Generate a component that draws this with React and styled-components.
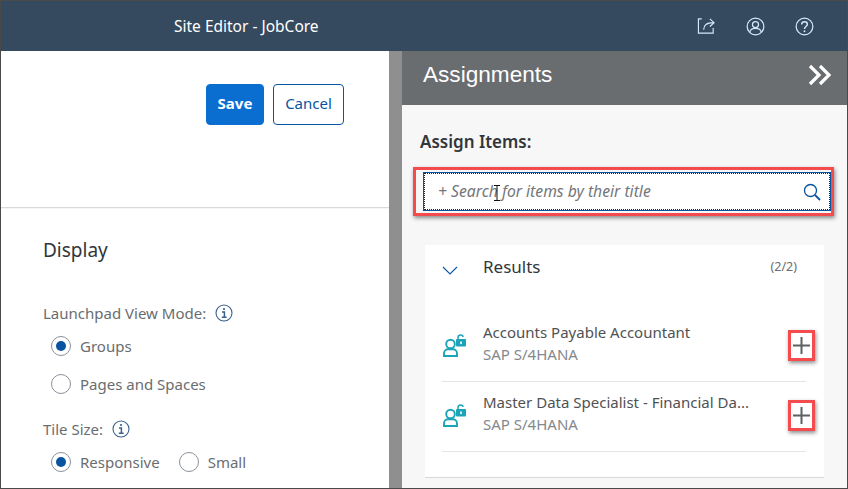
import React from 'react';
import styled, { createGlobalStyle } from 'styled-components';

const GlobalStyle = createGlobalStyle`
  html, body {
    margin: 0;
    padding: 0;
    background: #fff;
  }
  * {
    box-sizing: border-box;
  }
`;

const Frame = styled.div`
  width: 848px;
  height: 489px;
  overflow: hidden;
  display: flex;
  flex-direction: column;
  border: 1px solid #4a4a4a;
  font-family: "Noto Sans", "Open Sans", sans-serif;
`;

const Shell = styled.header`
  flex: 0 0 50px;
  background: #354a5f;
  display: flex;
  align-items: center;
  color: #fff;
  padding-left: 173px;
  padding-right: 33px;
`;

const ShellTitle = styled.div`
  flex: 1;
  font-size: 15.5px;
  margin-top: -1px;
`;

const ShellIcons = styled.div`
  display: flex;
  align-items: center;
  gap: 30px;
  color: #d1e8ff;
`;

const Body = styled.div`
  flex: 1;
  display: flex;
  min-height: 0;
`;

const LeftPanel = styled.section`
  flex: 0 0 388px;
  background: #fff;
  display: flex;
  flex-direction: column;
`;

const ActionBar = styled.div`
  flex: 0 0 157px;
  border-bottom: 1px solid #d9d9d9;
  box-shadow: 0 1px 1px rgba(0, 0, 0, 0.04);
  display: flex;
  justify-content: flex-end;
  gap: 9px;
  padding: 33px 45px 0 0;
`;

const Button = styled.button`
  height: 41px;
  width: ${p => (p.$primary ? 58 : 71)}px;
  border-radius: 4px;
  border: 1px solid ${p => (p.$primary ? '#0a6ed1' : '#0854a0')};
  background: ${p => (p.$primary ? '#0a6ed1' : '#fff')};
  color: ${p => (p.$primary ? '#fff' : '#0854a0')};
  font-family: inherit;
  font-size: 15px;
  font-weight: ${p => (p.$primary ? 700 : 400)};
  padding: 0 0 3px;
`;

const Form = styled.div`
  padding: 30px 0 0 42px;
  color: #6a6d70;
`;

const SectionTitle = styled.h2`
  margin: 0 0 41px;
  font-size: 19px;
  line-height: 24px;
  font-weight: 400;
  color: #32363a;
`;

const FieldLabel = styled.div`
  display: flex;
  align-items: center;
  gap: 9px;
  font-size: 15px;
  line-height: 20px;
  margin-bottom: ${p => p.$gap}px;
`;

const RadioRow = styled.div`
  display: flex;
  align-items: center;
  padding-left: 8px;
  margin-bottom: ${p => p.$gap || 0}px;
`;

const Radio = styled.label`
  display: flex;
  align-items: center;
  gap: 9px;
  font-size: 15px;
  line-height: 20px;
  margin-right: 19px;
`;

const RadioDot = styled.span`
  width: 20px;
  height: 20px;
  border-radius: 50%;
  border: 1px solid #89919a;
  background: #fff;
  display: flex;
  align-items: center;
  justify-content: center;

  &::after {
    content: "";
    width: 10px;
    height: 10px;
    border-radius: 50%;
    background: ${p => (p.$on ? '#0854a0' : 'transparent')};
  }
`;

const Splitter = styled.div`
  flex: 0 0 13px;
  background: #8f8f8f;
`;

const RightPanel = styled.section`
  flex: 1;
  background: #f7f7f7;
  display: flex;
  flex-direction: column;
`;

const PanelHeader = styled.div`
  flex: 0 0 54px;
  background: #6a6d70;
  color: #fff;
  display: flex;
  align-items: center;
  justify-content: space-between;
  padding: 0 15px 6px 21px;
  font-family: "Liberation Sans", Arial, sans-serif;
  font-size: 22.6px;
`;

const PanelBody = styled.div`
  flex: 1;
  padding: 26px 13px 0 11px;
`;

const AssignLabel = styled.div`
  font-size: 17px;
  line-height: 22px;
  font-weight: 600;
  color: #32363a;
  padding-left: 7px;
  margin-bottom: 14px;
`;

const Highlight = styled.div`
  border: 3px solid #f44b4f;
  box-shadow: 1px 2px 4px rgba(0, 0, 0, 0.45);
`;

const SearchBox = styled.div`
  height: 39px;
  margin: 2px 0 2px 7px;
  background: #fff;
  border: 1px solid #0854a0;
  outline: 1px dotted #222;
  outline-offset: -2px;
  display: flex;
  align-items: center;
  justify-content: space-between;
  padding: 0 9px 0 14px;
  position: relative;
`;

const Placeholder = styled.span`
  font-size: 15.7px;
  font-style: italic;
  color: #74777a;
  margin-top: -2px;
`;

const TextCursor = styled.svg`
  position: absolute;
  left: 69px;
  top: 12px;
`;

const ResultsCard = styled.div`
  margin: 29px 10px 0 12px;
  height: 233px;
  background: #fff;
  border-bottom: 1px solid #d9d9d9;
  padding: 0 18px 0 17px;
`;

const ResultsHeader = styled.div`
  height: 67px;
  display: flex;
  align-items: center;
  padding-bottom: 25px;
`;

const Chevron = styled.svg`
  flex: 0 0 16px;
  margin-top: 8px;
  margin-right: 25px;
`;

const ResultsTitle = styled.div`
  flex: 1;
  font-size: 17px;
  color: #32363a;
`;

const ResultsCount = styled.div`
  font-size: 12.5px;
  color: #6a6d70;
  padding-right: 9px;
`;

const Item = styled.div`
  display: flex;
  align-items: center;
  height: 70px;
  border-bottom: 1px solid #e5e5e5;
`;

const ItemIcon = styled.svg`
  flex: 0 0 23px;
  margin: 0 17px 2px 1px;
`;

const ItemText = styled.div`
  flex: 1;
  min-width: 0;
  padding-bottom: 6px;
`;

const ItemTitle = styled.div`
  font-size: 15px;
  line-height: 22px;
  color: #4f5255;
  white-space: nowrap;
`;

const ItemSub = styled.div`
  font-size: 15px;
  line-height: 23px;
  color: #85888b;
`;

const AddButton = styled.div`
  width: 27px;
  height: 31px;
  margin: 0 -9px 3px 0;
  border: 3px solid #f44b4f;
  box-shadow: 1px 2px 4px rgba(0, 0, 0, 0.45);
  display: flex;
  align-items: center;
  justify-content: center;
  background: #fff;
`;

const InfoIcon = () => (
  <svg width="18" height="18" viewBox="0 0 18 18" fill="none" stroke="#38618c">
    <circle cx="9" cy="9" r="8" strokeWidth="1.1" />
    <circle cx="9" cy="5" r="1.1" fill="#38618c" stroke="none" />
    <path d="M7 8h2.4v5M6.800 13.200h4.800" strokeWidth="1.5" />
  </svg>
);

const LockUser = () => (
  <ItemIcon width="23" height="23" viewBox="0 0 23 23" fill="none">
    <circle cx="7.5" cy="10" r="4.3" stroke="#1ba3b8" strokeWidth="1.9" />
    <path d="M1 22v-2.500c0-2.600 2-4.200 4-4.200h5c2 0 4 1.600 4 4.200V22z" stroke="#1ba3b8" strokeWidth="1.9" />
    <path d="M15 5V3.500C15 1.800 16.200 1 17.500 1S20 1.800 20 3" stroke="#1ba3b8" strokeWidth="1.5" />
    <rect x="13" y="5" width="10" height="7.5" rx="1" fill="#1ba3b8" />
    <rect x="17.2" y="7.5" width="1.6" height="2.6" fill="#fff" />
  </ItemIcon>
);

const Plus = () => (
  <svg width="19" height="19" viewBox="0 0 19 19" stroke="#5e6163" strokeWidth="2">
    <path d="M9.500 1v17M1 9.500h17" />
  </svg>
);

const items = ['Accounts Payable Accountant', 'Master Data Specialist - Financial Da...'];

export default function App() {
  return (
    <Frame>
      <GlobalStyle />
      <Shell>
        <ShellTitle>Site Editor - JobCore</ShellTitle>
        <ShellIcons>
          <svg width="19" height="18" viewBox="0 0 20 18" fill="none" stroke="currentColor" strokeWidth="1.2">
            <path d="M5 1.500H1.500v15H17V11" />
            <path d="M7 13c0-5 3-7.500 10.500-7.500M13.500 1.500l4.500 4-4.500 4" />
          </svg>
          <svg width="19" height="19" viewBox="0 0 20 20" fill="none" stroke="currentColor" strokeWidth="1.3">
            <circle cx="10" cy="10" r="8.8" />
            <circle cx="10" cy="8" r="3.2" />
            <path d="M4 16c.5-2.800 2.500-4 6-4s5.500 1.200 6 4" />
          </svg>
          <svg width="19" height="19" viewBox="0 0 20 20" fill="none" stroke="currentColor" strokeWidth="1.3">
            <circle cx="10" cy="10" r="8.8" />
            <path d="M7 7.800C7 5.900 8.300 5 10 5s3 1 3 2.600c0 2.400-3 2.400-3 4.900" strokeWidth="1.5" />
            <circle cx="10" cy="15" r="1" fill="currentColor" stroke="none" />
          </svg>
        </ShellIcons>
      </Shell>
      <Body>
        <LeftPanel>
          <ActionBar>
            <Button $primary>Save</Button>
            <Button>Cancel</Button>
          </ActionBar>
          <Form>
            <SectionTitle>Display</SectionTitle>
            <FieldLabel $gap={13}>
              Launchpad View Mode: <InfoIcon />
            </FieldLabel>
            <RadioRow $gap={18}>
              <Radio><RadioDot $on />Groups</Radio>
            </RadioRow>
            <RadioRow $gap={25}>
              <Radio><RadioDot />Pages and Spaces</Radio>
            </RadioRow>
            <FieldLabel $gap={13}>
              Tile Size: <InfoIcon />
            </FieldLabel>
            <RadioRow>
              <Radio><RadioDot $on />Responsive</Radio>
              <Radio><RadioDot />Small</Radio>
            </RadioRow>
          </Form>
        </LeftPanel>
        <Splitter />
        <RightPanel>
          <PanelHeader>
            Assignments
            <svg width="24" height="22" viewBox="0 0 24 22" fill="none" stroke="#fff" strokeWidth="3.2">
              <path d="M2 2l9 9-9 9M12 2l9 9-9 9" />
            </svg>
          </PanelHeader>
          <PanelBody>
            <AssignLabel>Assign Items:</AssignLabel>
            <Highlight>
              <SearchBox>
                <Placeholder>+ Search for items by their title</Placeholder>
                <TextCursor width="8" height="16" viewBox="0 0 8 16" fill="none" stroke="#111">
                  <path d="M1 .5h6M4 .5v15M1 15.500h6" />
                </TextCursor>
                <svg width="18" height="18" viewBox="0 0 18 18" fill="none" stroke="#0854a0" strokeWidth="1.3">
                  <circle cx="7.5" cy="7.5" r="6" />
                  <path d="M12 12l5 5" strokeWidth="1.8" />
                </svg>
              </SearchBox>
            </Highlight>
            <ResultsCard>
              <ResultsHeader>
                <Chevron width="16" height="9" viewBox="0 0 16 9" fill="none" stroke="#0854a0" strokeWidth="1.1">
                  <path d="M1 1l7 7 7-7" />
                </Chevron>
                <ResultsTitle>Results</ResultsTitle>
                <ResultsCount>(2/2)</ResultsCount>
              </ResultsHeader>
              {items.map(t => (
                <Item key={t}>
                  <LockUser />
                  <ItemText>
                    <ItemTitle>{t}</ItemTitle>
                    <ItemSub>SAP S/4HANA</ItemSub>
                  </ItemText>
                  <AddButton><Plus /></AddButton>
                </Item>
              ))}
            </ResultsCard>
          </PanelBody>
        </RightPanel>
      </Body>
    </Frame>
  );
}
